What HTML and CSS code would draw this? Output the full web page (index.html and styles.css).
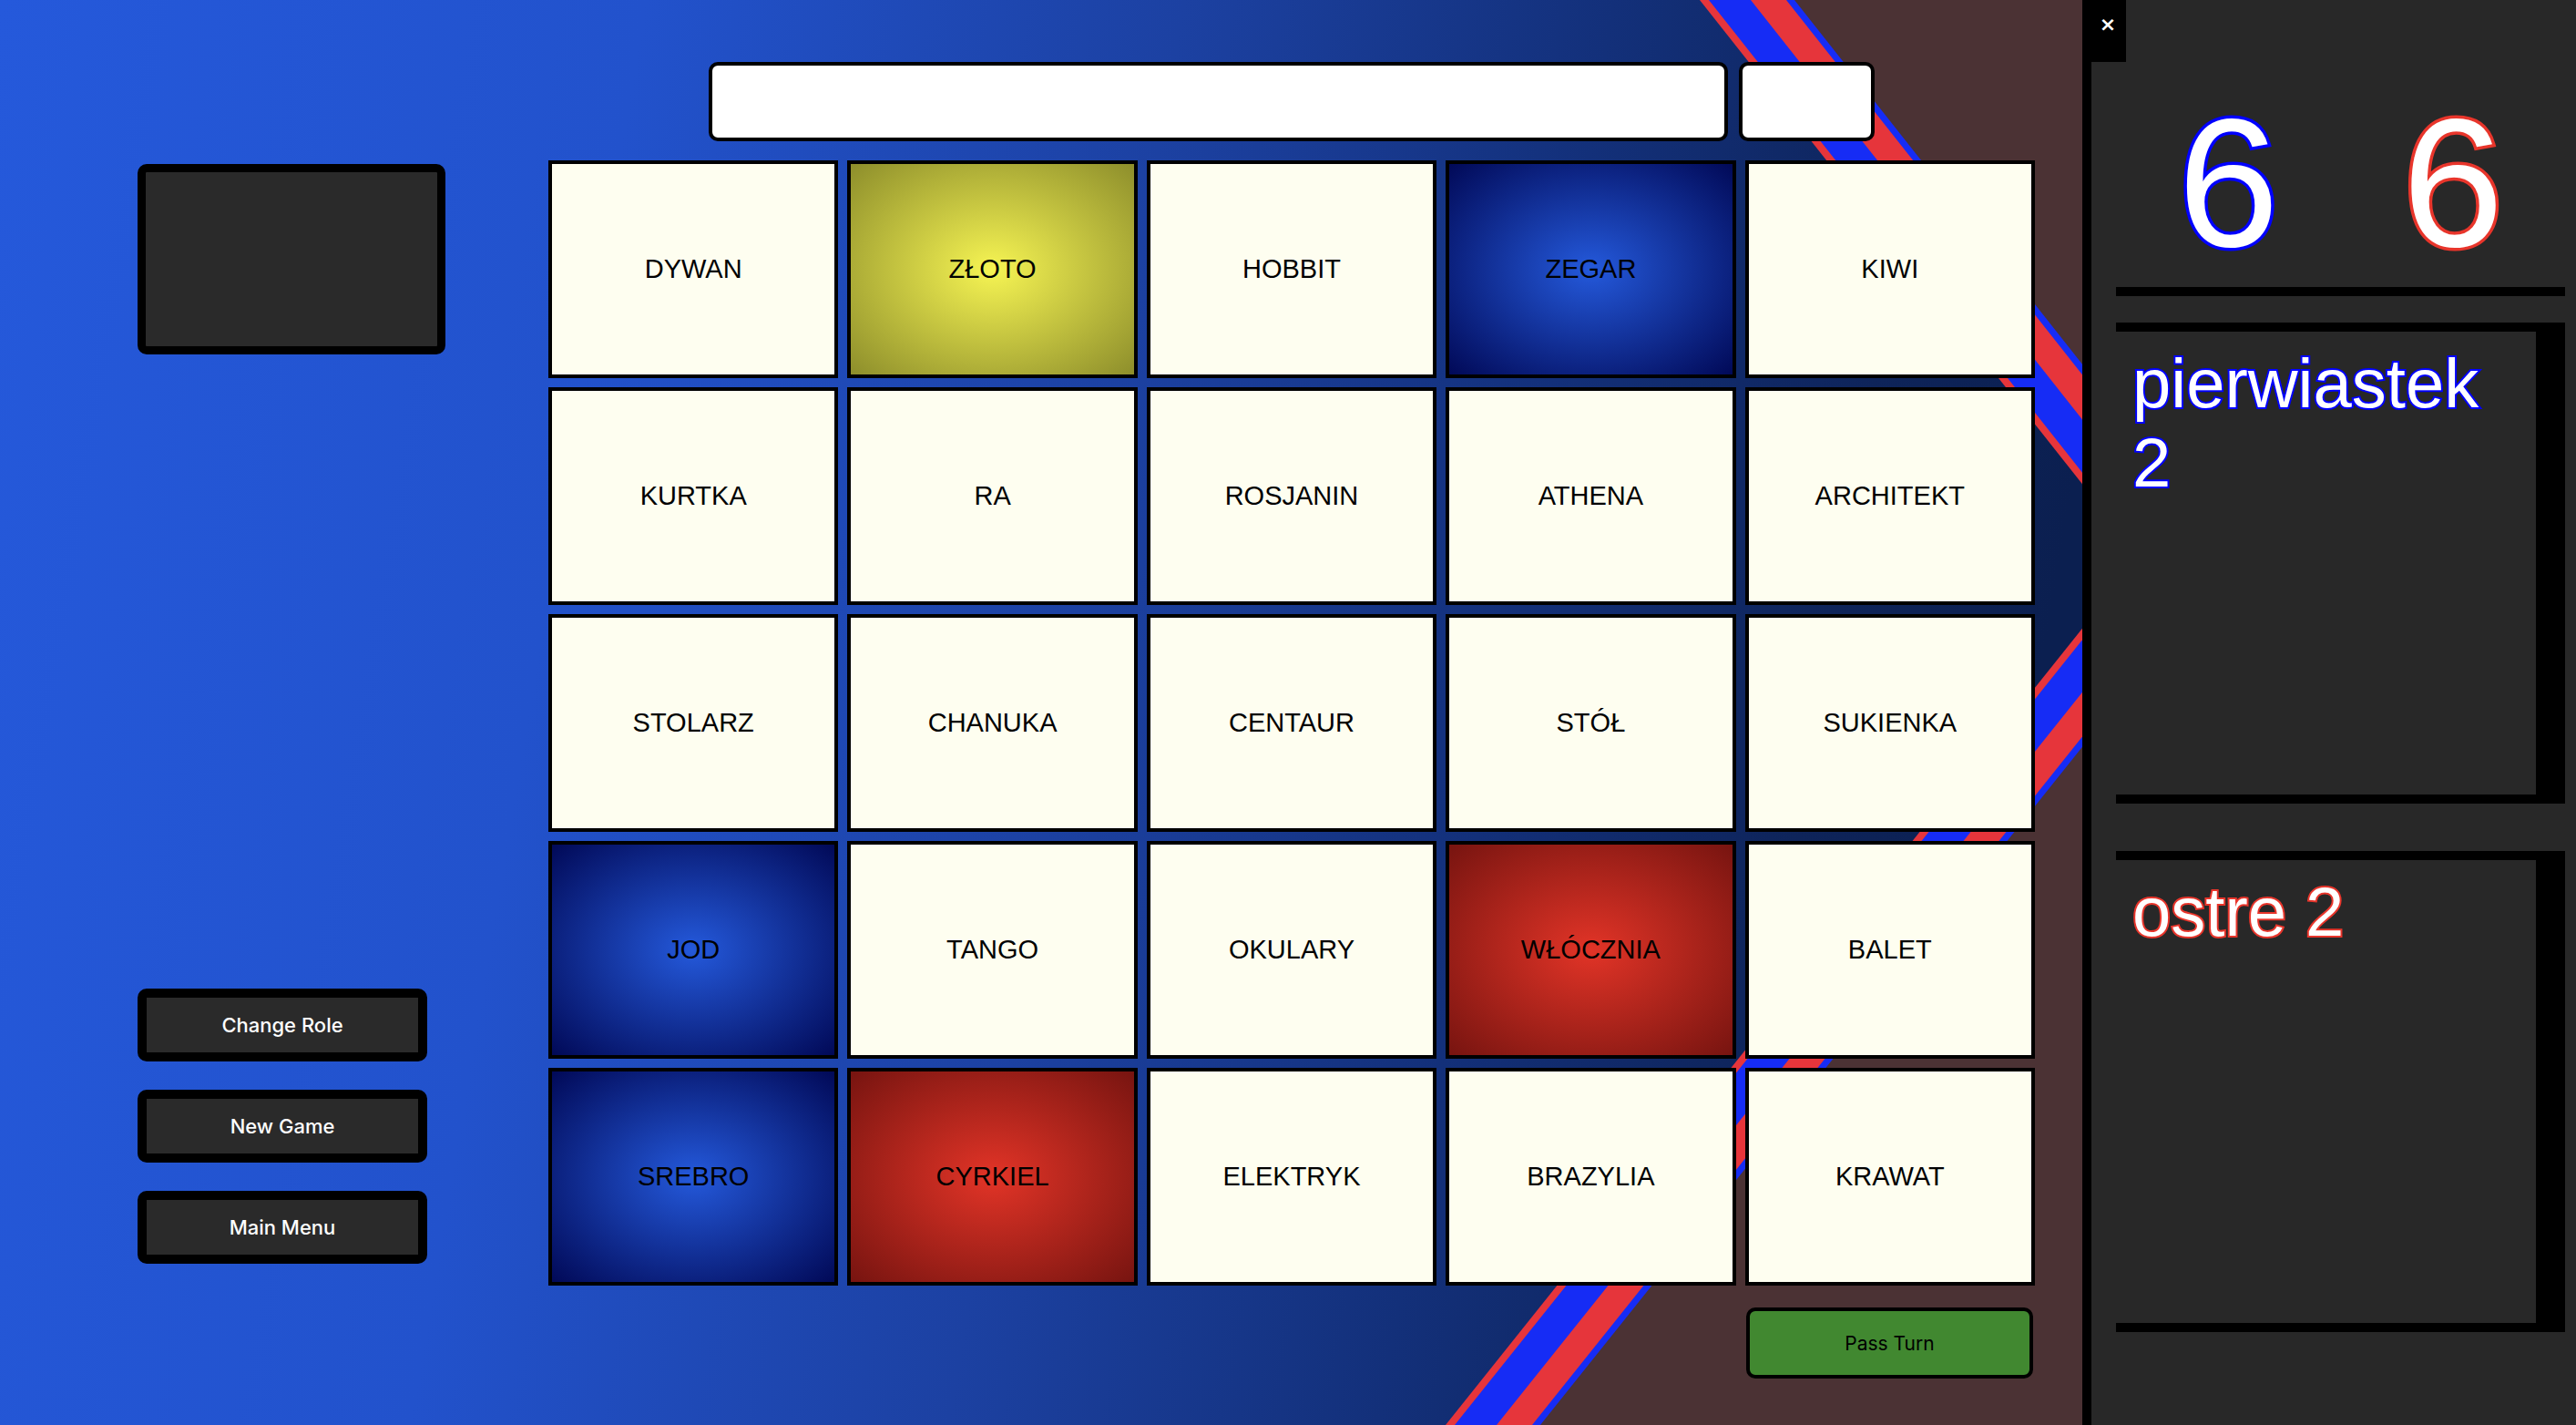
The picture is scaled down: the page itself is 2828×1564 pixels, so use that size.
FILE: index.html
```html
<!DOCTYPE html>
<html lang="pl">
<head>
<meta charset="utf-8">
<title>Tajniacy</title>
<link rel="stylesheet" href="styles.css">
</head>
<body>
<div class="app">
  <main class="board-area">
    <svg class="bg" viewBox="0 0 2286 1564" preserveAspectRatio="none" aria-hidden="true">
      <defs>
        <linearGradient id="navy" gradientUnits="userSpaceOnUse" x1="0" y1="0" x2="2300" y2="380">
          <stop offset="0" stop-color="#2559db"/>
          <stop offset="0.3" stop-color="#2252cc"/>
          <stop offset="0.55" stop-color="#1c41a2"/>
          <stop offset="0.75" stop-color="#13307a"/>
          <stop offset="0.9" stop-color="#0e245a"/>
          <stop offset="1" stop-color="#0b1f50"/>
        </linearGradient>
      </defs>
      <rect width="2286" height="1564" fill="#4b3234"/>
      <polygon points="0,0 1970,0 2453,611 1691,1564 0,1564" fill="#162cf5"/>
      <polygon points="0,0 1961,0 2444,611 1682,1564 0,1564" fill="#e6353b"/>
      <polygon points="0,0 1922,0 2405,611 1643,1564 0,1564" fill="#162cf5"/>
      <polygon points="0,0 1876,0 2359,611 1597,1564 0,1564" fill="#e6353b"/>
      <polygon points="0,0 1866,0 2349,611 1587,1564 0,1564" fill="url(#navy)"/>
    </svg>

    <div class="left-col">
      <div class="clue-card"></div>
      <div class="menu">
        <button class="menu-btn">Change Role</button>
        <button class="menu-btn">New Game</button>
        <button class="menu-btn">Main Menu</button>
      </div>
    </div>

    <section class="board">
      <div class="clue-inputs">
        <div class="clue-word"></div>
        <div class="clue-num"></div>
      </div>
      <div class="grid">
        <div class="tile">DYWAN</div>
        <div class="tile yellow">ZŁOTO</div>
        <div class="tile">HOBBIT</div>
        <div class="tile blue">ZEGAR</div>
        <div class="tile">KIWI</div>

        <div class="tile">KURTKA</div>
        <div class="tile">RA</div>
        <div class="tile">ROSJANIN</div>
        <div class="tile">ATHENA</div>
        <div class="tile">ARCHITEKT</div>

        <div class="tile">STOLARZ</div>
        <div class="tile">CHANUKA</div>
        <div class="tile">CENTAUR</div>
        <div class="tile">STÓŁ</div>
        <div class="tile">SUKIENKA</div>

        <div class="tile blue">JOD</div>
        <div class="tile">TANGO</div>
        <div class="tile">OKULARY</div>
        <div class="tile red">WŁÓCZNIA</div>
        <div class="tile">BALET</div>

        <div class="tile blue">SREBRO</div>
        <div class="tile red">CYRKIEL</div>
        <div class="tile">ELEKTRYK</div>
        <div class="tile">BRAZYLIA</div>
        <div class="tile">KRAWAT</div>
      </div>
      <div class="actions">
        <button class="pass-btn">Pass Turn</button>
      </div>
    </section>
  </main>

  <aside class="panel">
    <button class="close">×</button>
    <div class="scores">
      <span class="score score-blue">6</span>
      <span class="score score-red">6</span>
    </div>
    <div class="log log-first">
      <p class="log-text text-blue">pierwiastek 2</p>
    </div>
    <div class="log log-second">
      <p class="log-text text-red">ostre 2</p>
    </div>
  </aside>
</div>
</body>
</html>
```

FILE: styles.css
```css
* {
  box-sizing: border-box;
}

html, body {
  margin: 0;
  padding: 0;
  width: 2828px;
  height: 1564px;
  overflow: hidden;
  background: #282828;
}

.app {
  display: flex;
  width: 2828px;
  height: 1564px;
}

.board-area {
  position: relative;
  flex: 1;
  display: flex;
  padding-left: 151px;
  height: 1564px;
}

.bg {
  position: absolute;
  left: 0;
  top: 0;
  width: 100%;
  height: 100%;
  z-index: 0;
  display: block;
}

.left-col,
.board {
  position: relative;
  z-index: 1;
}

.left-col {
  width: 338px;
  height: 1564px;
  display: flex;
  flex-direction: column;
  justify-content: space-between;
  padding: 180px 0 177px;
}

.clue-card {
  height: 209px;
  border: 9px solid #000;
  border-radius: 10px;
  background: #2a2a2a;
}

.menu {
  display: flex;
  flex-direction: column;
  gap: 31px;
  width: 318px;
}

.menu-btn {
  height: 80px;
  border: 10px solid #000;
  border-radius: 10px;
  background: #2a2a2a;
  color: #fff;
  font-family: Inter, "Noto Sans", sans-serif;
  font-weight: 500;
  font-size: 22px;
  padding: 0;
}

.board {
  margin-left: 113px;
  width: 1632px;
  display: flex;
  flex-direction: column;
}

.clue-inputs {
  padding-top: 68px;
  display: flex;
  justify-content: center;
  gap: 12px;
}

.clue-word,
.clue-num {
  height: 87px;
  background: #fff;
  border: 4px solid #000;
  border-radius: 10px;
}

.clue-word {
  width: 1119px;
}

.clue-num {
  width: 149px;
}

.grid {
  margin-top: 21px;
  display: grid;
  grid-template-columns: repeat(5, 1fr);
  grid-auto-rows: 239px;
  gap: 10px;
}

.tile {
  border: 4px solid #000;
  background: #fefef0;
  display: flex;
  align-items: center;
  justify-content: center;
  font-family: "Liberation Sans", Arial, sans-serif;
  font-size: 29px;
  color: #000;
}

.tile.yellow {
  background: radial-gradient(#f6f453, #8d8e2b);
}

.tile.blue {
  background: radial-gradient(#2459db, #010957);
}

.tile.red {
  background: radial-gradient(#e23427, #771410);
}

.actions {
  margin-top: 24px;
  display: flex;
  justify-content: flex-end;
  padding-right: 2px;
}

.pass-btn {
  width: 315px;
  height: 78px;
  background: #418830;
  border: 4px solid #000;
  border-radius: 10px;
  color: #000;
  font-family: Inter, "Noto Sans", sans-serif;
  font-size: 21px;
  padding: 0;
}

.panel {
  position: relative;
  flex: none;
  width: 542px;
  height: 1564px;
  background: #282828;
  border-left: 10px solid #000;
  padding: 0 12px 0 27px;
}

.close {
  position: absolute;
  left: -10px;
  top: 0;
  width: 48px;
  height: 68px;
  background: #000;
  color: #fff;
  border: none;
  font-family: "DejaVu Sans", sans-serif;
  font-weight: bold;
  font-size: 22px;
  line-height: 1;
  display: flex;
  justify-content: center;
  align-items: flex-start;
  padding: 16px 0 0 8px;
}

.scores {
  height: 325px;
  padding-top: 86px;
  border-bottom: 10px solid #000;
  display: flex;
  justify-content: space-around;
}

.score {
  font-family: "Liberation Sans", Arial, sans-serif;
  font-size: 200px;
  line-height: 229px;
  color: #fff;
  -webkit-text-stroke: 7px #0000ff;
  paint-order: stroke fill;
}

.score-red {
  -webkit-text-stroke-color: #e8352b;
}

.log {
  height: 528px;
  border-top: 10px solid #000;
  border-bottom: 10px solid #000;
  border-right: 32px solid #000;
  padding: 13px 18px;
}

.log-first {
  margin-top: 29px;
}

.log-second {
  margin-top: 52px;
}

.log-text {
  margin: 0;
  font-family: "Liberation Sans", Arial, sans-serif;
  font-size: 76px;
  line-height: normal;
  color: #fff;
  paint-order: stroke fill;
}

.text-blue {
  -webkit-text-stroke: 4px #0000ff;
}

.text-red {
  -webkit-text-stroke: 4px #e8352b;
}
```
